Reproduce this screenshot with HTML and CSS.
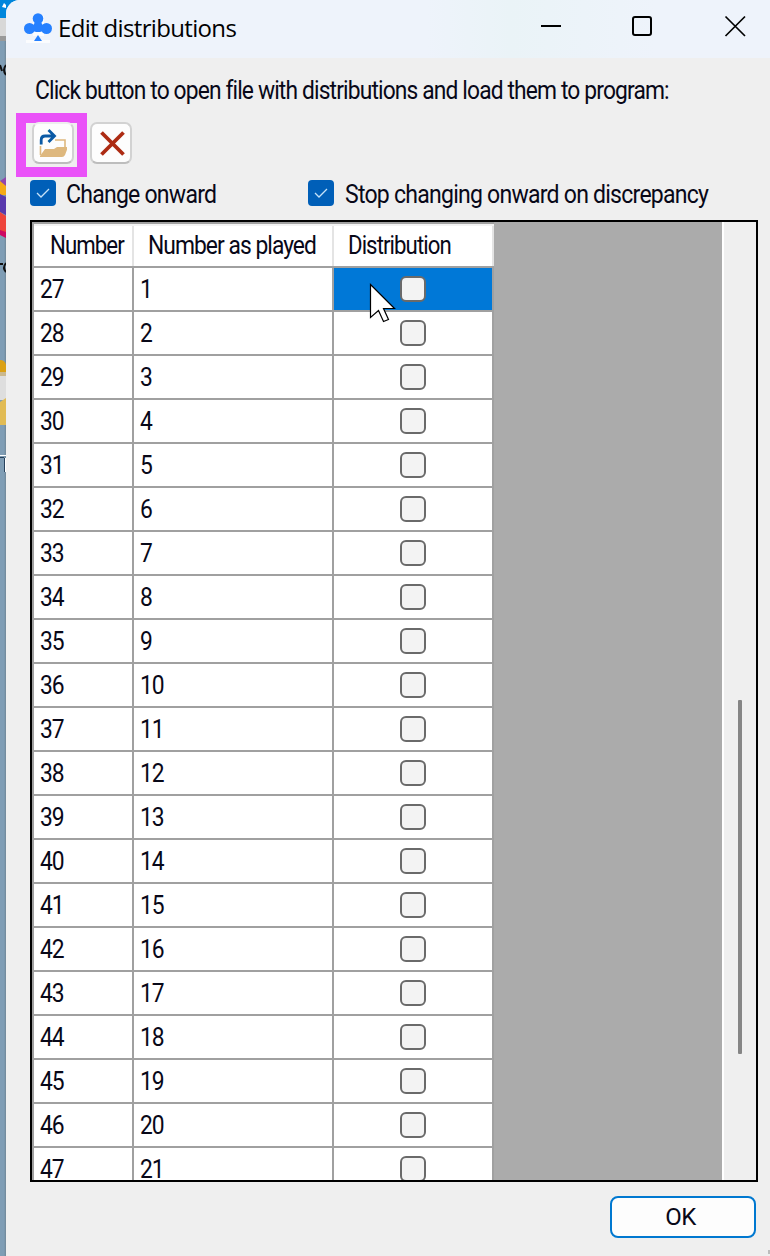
FILE: index.html
```html
<!DOCTYPE html>
<html lang="en">
<head>
<meta charset="utf-8">
<title>Edit distributions</title>
<link rel="stylesheet" href="styles.css">
</head>
<body>
<div class="screen">
  <div class="desktop">
    <svg width="18" height="500" viewBox="0 0 18 500">
      <path fill="#0086dc" d="M0 0h18v18H0z"/><path fill="#fff" d="M2 7l2-4 2 2v3z"/>
      <path fill="#d8d8d8" d="M0 18h18v18H0z"/><path fill="#999" d="M0 36h6v5H0z"/>
      <path d="M0 65l2 6M6 65q-4 5 0 10" stroke="#111" stroke-width="2" fill="none"/>
      <path fill="#9146ad" d="M0 181l6-4v9H0z"/><path fill="#f5aa16" d="M0 181l6 5v9H0z"/>
      <path fill="#5939ad" d="M0 194l6 3v18l-6-3z"/><path fill="#ee443b" d="M0 212l6 4v17H0z"/>
      <path fill="#cd0962" d="M0 230l6 2v6l-6-3z"/>
      <path d="M0 264h3M6 263q-4 5 0 9" stroke="#111" stroke-width="2" fill="none"/>
      <path fill="#dba115" d="M0 360q5 0 6 5v8H0z"/><path fill="#cbb98e" d="M0 372h6v5H0z"/><path fill="#dedede" d="M0 376h6v24H0z"/>
      <path fill="#e1bb54" d="M0 402l6-4v27H0z"/>
      <path stroke="#fff" stroke-width="1" fill="none" d="M0 455.500h6M5.500 458v14"/>
      <path stroke="#28415b" d="M0 457.500h4M4.500 458v14"/>
    </svg>
  </div>
  <main class="dialog">
    <header class="titlebar">
      <svg class="club" width="28" height="30" viewBox="0 0 28 30">
        <path fill="#fff" d="M2 27h24v3H2zM9 3h11v20H9z" opacity=".75"/>
        <g fill="#2580ff"><circle cx="14" cy="5.500" r="5.300"/><circle cx="5.500" cy="15.500" r="5.500"/><circle cx="22.500" cy="15.500" r="5.500"/><path d="M11 9h6l2 4v5l-3 1h-4l-3-1v-5zM14 22l4 6h-8z"/></g>
      </svg>
      <h1 class="title">Edit distributions</h1>
      <svg class="controls" width="206" height="22" viewBox="0 0 206 22" fill="none" stroke="#000" stroke-width="2">
        <path d="M1 11h20"/><rect x="93" y="2" width="18" height="18" rx="2"/>
        <path stroke-width="1.700" d="M185.500 1.500l19.500 19.500M205 1.500L185.500 21"/>
      </svg>
    </header>
    <p class="intro"><span class="text">Click button to open file with distributions and load them to program:</span></p>
    <div class="toolbar">
      <div class="highlight"><button class="tool">
        <svg width="28" height="28" viewBox="0 0 28 28">
          <path fill="none" stroke="#deb87e" stroke-width="1.600" d="M1.500 17v9M16 11h10v8"/>
          <path fill="#deb87e" d="M1 27l5-7h9l3-2h11l-3 8q-1 2-3 2H1z"/>
          <path fill="none" stroke="#0a5aa5" stroke-width="2.800" d="M2.200 15.500V11q0-4 4-4h9M9.500 1l6 6-6 6"/>
        </svg></button></div>
      <button class="tool">
        <svg width="26" height="26" viewBox="0 0 26 26"><path d="M2.500 2.500l22 22M24.500 2.500l-22 22" stroke="#ad2b13" stroke-width="3.800"/></svg>
      </button>
    </div>
    <div class="options">
      <div class="option first"><span class="check"><svg width="26" height="26" viewBox="0 0 26 26"><path d="M7 13l4 4 8-8" fill="none" stroke="#c5e2f8" stroke-width="1.300"/></svg></span><span class="text">Change onward</span></div>
      <div class="option second"><span class="check"><svg width="26" height="26" viewBox="0 0 26 26"><path d="M7 13l4 4 8-8" fill="none" stroke="#c5e2f8" stroke-width="1.300"/></svg></span><span class="text">Stop changing onward on discrepancy</span></div>
    </div>
    <section class="grid-frame">
      <div class="grid">
        <div class="grid-row head"><span><b class="text">Number</b></span><span><b class="text">Number as played</b></span><span><b class="text">Distribution</b></span></div>
        <div id="rows"></div>
      </div>
      <div class="empty"></div>
      <div class="scroll"><div class="thumb"></div></div>
    </section>
    <footer class="footer"><button class="ok">OK</button></footer>
  </main>
  <svg class="cursor" width="28" height="42" viewBox="0 0 28 42"><path d="M1.500 1.500v33l8-7 5 11 5-2-5-11h11z" fill="#fff" stroke="#000" stroke-width="1.200"/></svg>
  <i class="grip"></i>
</div>
<script src="script.js"></script>
</body>
</html>
```
FILE: styles.css
```css
* { box-sizing: border-box; }
body { margin: 0; font-family: Roboto, "Liberation Sans", sans-serif; color: #080818; }
button { padding: 0; font: inherit; color: inherit; }
svg { display: block; flex: none; }
.text { display: inline-block; font-weight: 400; white-space: nowrap; transform-origin: 0 50%; transform: translateY(1px) scaleX(.912); }
.screen { position: relative; width: 770px; height: 1256px; overflow: hidden; display: flex; background: linear-gradient(90deg, #7f9db5 0 4px, #708797 6px); }
.desktop { width: 6px; flex: none; }
.dialog { position: relative; width: 764px; height: 1256px; background: #efefef; border-top-left-radius: 14px; overflow: hidden; }
.titlebar { height: 58px; display: flex; align-items: flex-start; background: linear-gradient(90deg, #eef3fb 0 55%, #eaf3f7 66%, #eef3fb 85%); padding: 13px 24px 0 18px; }
.title { margin: -1px 0 0 6px; font: 400 24px/32px "Open Sans", sans-serif; letter-spacing: -.66px; color: #000; }
.controls { margin: 2px 0 0 auto; }
.intro { margin: 17px 0 0 29px; height: 30px; font-size: 25px; line-height: 30px; letter-spacing: -.94px; white-space: nowrap; }
.toolbar { display: flex; align-items: flex-start; height: 64px; margin: 8px 0 0 10px; gap: 3px; }
.highlight { width: 71px; height: 64px; padding: 9px 0 0 16px; background: linear-gradient(#ea52f8, #ea52f8) 0 0 / 100% 10px no-repeat, linear-gradient(#ea52f8, #ea52f8) 0 100% / 100% 10px no-repeat, linear-gradient(#ea52f8, #ea52f8) 0 0 / 10px 100% no-repeat, linear-gradient(#ea52f8, #ea52f8) 100% 0 / 10px 100% no-repeat; }
.tool { width: 42px; height: 42px; display: flex; align-items: center; justify-content: center; border: 2px solid #d2d2d2; border-bottom-color: #bdbdbd; border-radius: 7px; background: #fdfdfd; }
.toolbar > .tool { margin-top: 9px; padding-left: 1px; }
.highlight .tool { border-top-color: #eee; }
.options { display: flex; height: 43px; padding: 3px 0 0 24px; }
.option { display: flex; align-items: flex-start; font-size: 25px; line-height: 28px; letter-spacing: -.83px; white-space: nowrap; }
.first .text { transform: translateY(1px) scaleX(.922); }
.second .text { transform: translate(1px, 1px) scaleX(.922); }
.first { width: 278px; }
.check { width: 26px; height: 26px; flex: none; background: #005fb8; border-radius: 4px; margin-right: 10px; }
.grid-frame { width: 728px; height: 962px; margin-left: 24px; border: 2px solid #000; display: flex; overflow: hidden; background: #ababab; }
.grid { width: 462px; border: solid #a0a0a0; border-width: 2px 0 0 2px; flex: none; }
.grid-row { display: grid; grid-template-columns: 100px 200px 160px; grid-template-rows: 44px; font-size: 25px; line-height: 42px; letter-spacing: -1.04px; }
.grid-row > span { border: solid #a0a0a0; border-width: 0 2px 2px 0; background: #fff; padding-left: 6px; white-space: nowrap; }
#rows .grid-row:last-child { grid-template-rows: 32px; }
#rows .grid-row:last-child > span { border-bottom: 0; }
#rows .grid-row:last-child .text { line-height: 30px; margin-top: 6px; height: 25px; display: block; }
#rows .grid-row:last-child .cell { align-items: flex-start; padding-top: 8px; overflow: hidden; }
.head > span { padding-left: 14px; box-shadow: inset 0 2px #f2f2f2, inset -2px 0 #e4e4e4; border-right: 0; }
.head > span:first-child { padding-left: 16px; }
.head > span:not(:nth-child(2)) .text { transform: translateY(1px) scaleX(.888); }
.grid-row .cell { display: flex; align-items: center; justify-content: center; padding: 0; }
.grid-row .selected { background: #0078d7; }
.box { width: 26px; height: 26px; flex: none; border: 2px solid #6a6a6a; border-radius: 6px; background: #f3f3f3; }
.empty { width: 228px; flex: none; }
.scroll { width: 34px; border-left: 2px solid #fff; background: #efefef; padding: 478px 0 0 14px; }
.thumb { width: 4px; height: 354px; background: #858585; border-radius: 1px; }
.footer { display: flex; justify-content: flex-end; padding: 14px 14px 0 0; }
.ok { width: 146px; height: 42px; border: 2px solid #0078d0; border-radius: 8px; background: #fdfdfd; font-size: 24px; letter-spacing: -.5px; padding: 0 5px 0 0; }
.cursor { position: absolute; left: 369px; top: 283px; }
.grip { position: absolute; left: 768px; top: 1250px; width: 2px; height: 4px; background: #bcbcbc; }
```
FILE: script.js
```js
const rows = document.getElementById("rows");
for (let n = 27; n <= 47; n++) {
  const row = document.createElement("div");
  row.className = "grid-row";
  row.innerHTML = `<span><b class="text">${n}</b></span><span><b class="text">${n - 26}</b></span><span class="cell${n === 27 ? " selected" : ""}"><i class="box"></i></span>`;
  rows.append(row);
}
```
